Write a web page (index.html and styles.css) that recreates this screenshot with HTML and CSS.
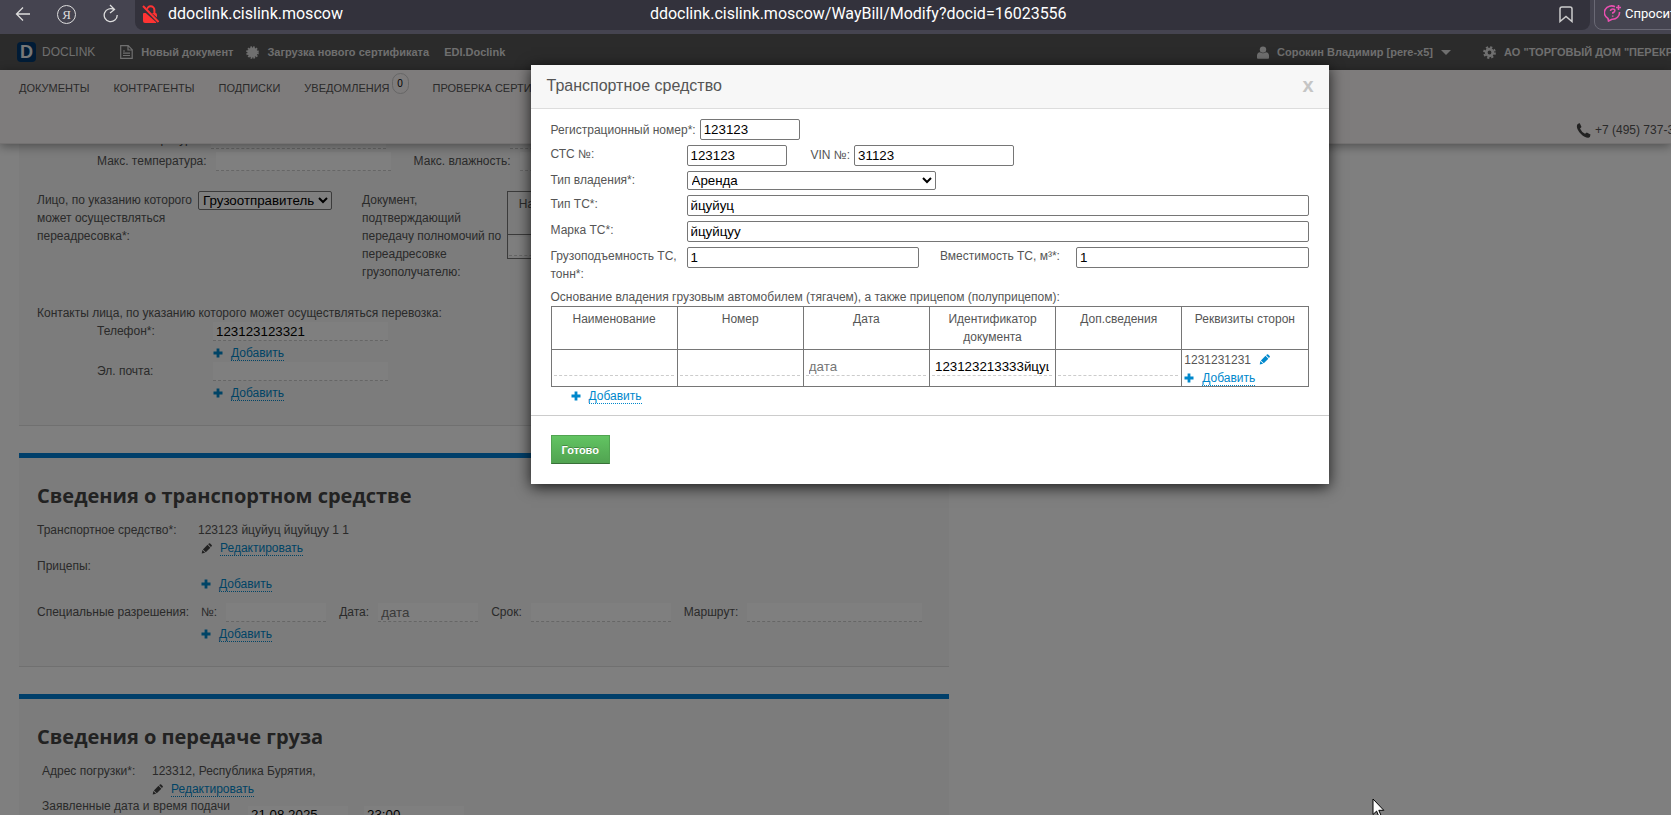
FILE: index.html
```html
<!DOCTYPE html>
<html lang="ru">
<head>
<meta charset="utf-8">
<title>ddoclink.cislink.moscow/WayBill/Modify?docid=16023556</title>
<link rel="stylesheet" href="styles.css">
</head>
<body>
<svg class="defs" aria-hidden="true">
  <symbol id="plus" viewBox="0 0 10 10"><path d="M3.6 0.5h2.8v3.1h3.1v2.8H6.4v3.1H3.6V6.4H0.5V3.6h3.1z"/></symbol>
  <symbol id="pencil" viewBox="0 0 12 12"><path d="M0.8 11.4l.7-3.7 3 3zM2.1 7l5-5 3.1 3.1-5 5zM7.8 1.4l.8-.8q.7-.6 1.4 0l1.6 1.6q.6.7 0 1.4l-.8.8z"/></symbol>
</svg>
<header class="chrome">
  <button class="chrome-btn back" aria-label="Назад"><svg width="16" height="16" viewBox="0 0 16 16"><path d="M15 8H1.5M8 1.5L1.5 8 8 14.500"/></svg></button>
  <button class="chrome-btn ya" aria-label="Яндекс"><span>Я</span></button>
  <button class="chrome-btn reload" aria-label="Обновить"><svg width="16" height="20" viewBox="0 0 16 20"><path d="M14.200 11a6.500 6.500 0 1 1-3-5.300M7 1l4.500 4.500L7 9"/></svg></button>
  <div class="address">
    <svg class="lock" width="17" height="18" viewBox="0 0 17 18"><path d="M5 7V5a3.700 3.700 0 0 1 7.400 0v4" fill="none" stroke="#ff3333" stroke-width="2"/><path d="M1.500 8h12q1.500 0 1.500 1.500V16l-1 2H3q-2 0-2-2V9z" fill="#ff3333"/><path d="M0 2l17 15" stroke="#33323c" stroke-width="4"/><path d="M1 1l15.500 16" stroke="#ff3333" stroke-width="2"/></svg>
    <span class="host">ddoclink.cislink.moscow</span>
    <span class="url">ddoclink.cislink.moscow/WayBill/Modify?docid=16023556</span>
    <svg class="bookmark" width="14" height="17" viewBox="0 0 14 17"><path d="M1 3q0-2 2-2h8q2 0 2 2v12.500L7 10.500 1 15.500z"/></svg>
  </div>
  <button class="ask"><svg width="18" height="17" viewBox="0 0 18 17"><path d="M11 1.800A7 6.600 0 1 0 4 13.500L4.500 16l3.500-1.800A7 6.600 0 0 0 15.500 7M14.500 0v5M12 2.500h5M6.500 6q.3-2 2.300-2 2.200 0 2 1.800-.2 1.200-2 2v1M8.700 10.500v1.200"/></svg>Спросить</button>
</header>

<div class="page">
  <div class="topbar">
    <span class="logo">D</span><span class="brand">DOCLINK</span>
    <a class="top-link" href="#"><svg width="13" height="14" viewBox="0 0 13 14"><path d="M.7.700h7.500l4 4v8.600H.7zM8 .700v4.300h4M3 6h2M3 8.200h7M3 10.500h7" fill="none" stroke="currentColor" stroke-width="1.200"/></svg>Новый документ</a>
    <a class="top-link cert" href="#"><svg width="13" height="13" viewBox="0 0 13 13"><circle cx="6.500" cy="6.500" r="5"/><circle cx="6.500" cy="6.500" r="5.300" fill="none" stroke="currentColor" stroke-width="2" stroke-dasharray="1.700 1.070"/></svg>Загрузка нового сертификата</a>
    <a class="top-link edi" href="#">EDI.Doclink</a>
    <div class="account">
      <a class="top-link user" href="#"><svg width="12" height="13" viewBox="0 0 12 13"><circle cx="6" cy="3.600" r="3.200"/><path d="M0 12V9.500q.2-3 3-3.200 3 2 6 0 2.800.2 3 3.200V12q0 .7-1 .7H1q-1 0-1-.7z"/></svg>Сорокин Владимир [pere-x5]<i class="caret"></i></a>
      <a class="top-link" href="#"><svg width="13" height="13" viewBox="0 0 13 13"><circle cx="6.500" cy="6.500" r="3.300" fill="none" stroke="currentColor" stroke-width="2.800"/><circle cx="6.500" cy="6.500" r="5.400" fill="none" stroke="currentColor" stroke-width="2" stroke-dasharray="2.200 2.040"/></svg>АО "ТОРГОВЫЙ ДОМ "ПЕРЕКРЕСТОК"</a>
    </div>
  </div>
  <div class="band">
    <nav class="menu">
      <a href="#">ДОКУМЕНТЫ</a><a href="#">КОНТРАГЕНТЫ</a><a href="#">ПОДПИСКИ</a><a class="notify" href="#">УВЕДОМЛЕНИЯ<span class="count">0</span></a><a href="#">ПРОВЕРКА СЕРТИФИКАТОВ</a>
    </nav>
    <div class="phone"><svg width="15" height="15" viewBox="0 0 15 15"><path d="M1 2Q2 0 3.800.200L5.500 4 4 5.500Q5.500 9 9 10.800L10.800 9.500 14.500 11.500Q14.500 14 12.500 14.700 9 15 5 11 0 6 1 2z"/></svg>+7 (495) 737-3535</div>
  </div>

  <main class="content">
    <section class="card first">
      <div class="climate"><label for="t0">Мин. температура:</label><input class="line w175" id="t0"><label class="next" for="h0">Мин. влажность:</label><input class="line w175" id="h0"></div>
      <div class="climate"><label for="t1">Макс. температура:</label><input class="line w175" id="t1"><label class="next" for="h1">Макс. влажность:</label><input class="line w175" id="h1"></div>
      <div class="redirect">
        <label for="who">Лицо, по указанию которого может осуществляться переадресовка*:</label>
        <div><select id="who"><option>Грузоотправитель</option></select></div>
        <div class="doc-label">Документ, подтверждающий передачу полномочий по переадресовке грузополучателю:</div>
        <table class="grid">
          <tr><th>Наименование</th><th>Номер</th><th>Дата</th><th>Доп.сведения</th></tr>
          <tr><td><input class="line" aria-label="Наименование"></td><td><input class="line" aria-label="Номер"></td><td><input class="line" aria-label="Дата"></td><td><input class="line" aria-label="Доп.сведения"></td></tr>
        </table>
      </div>
      <div>Контакты лица, по указанию которого может осуществляться перевозка:</div>
      <div class="contact"><label for="tel">Телефон*:</label><div><input class="line w175" id="tel" value="123123123321"></div></div>
      <div class="contact add"><span></span><a class="act" href="#"><svg><use href="#plus"/></svg><span>Добавить</span></a></div>
      <div class="contact"><label for="mail">Эл. почта:</label><div><input class="line w175" id="mail"></div></div>
      <div class="contact add"><span></span><a class="act" href="#"><svg><use href="#plus"/></svg><span>Добавить</span></a></div>
    </section>

    <section class="card">
      <h2>Сведения о транспортном средстве</h2>
      <div class="pair"><span>Транспортное средство*:</span><span>123123 йцуйуц йцуйцуу 1 1</span></div>
      <div class="pair"><span></span><a class="act edit" href="#"><svg><use href="#pencil"/></svg><span>Редактировать</span></a></div>
      <div class="pair"><span>Прицепы:</span></div>
      <div class="pair"><span></span><a class="act indent" href="#"><svg><use href="#plus"/></svg><span>Добавить</span></a></div>
      <div class="pair permits"><span>Специальные разрешения:</span>
        <div class="permit-fields">
          <span><label for="pn">№:</label><input class="line w100" id="pn"></span>
          <span><label for="pd">Дата:</label><input class="line w100" id="pd" placeholder="дата"></span>
          <span><label for="ps">Срок:</label><input class="line w140" id="ps"></span>
          <span><label for="pm">Маршрут:</label><input class="line w175" id="pm"></span>
        </div>
      </div>
      <div class="pair"><span></span><a class="act indent" href="#"><svg><use href="#plus"/></svg><span>Добавить</span></a></div>
    </section>

    <section class="card">
      <h2>Сведения о передаче груза</h2>
      <div class="cargo"><span>Адрес погрузки*:</span><span>123312, Республика Бурятия,</span></div>
      <div class="cargo"><span></span><a class="act edit" href="#"><svg><use href="#pencil"/></svg><span>Редактировать</span></a></div>
      <div class="arrival"><label for="ad">Заявленные дата и время подачи транспортного средства:</label><input class="line w100" id="ad" value="21.08.2025"><input class="line w100" aria-label="Время" value="23:00"></div>
    </section>
  </main>

  <div class="overlay"></div>

  <div class="modal" role="dialog" aria-labelledby="mt">
    <div class="modal-head"><h3 id="mt">Транспортное средство</h3><button class="close" aria-label="Закрыть">x</button></div>
    <form class="modal-body">
      <div class="row mid"><label for="reg">Регистрационный номер*:</label><input class="box w100" id="reg" value="123123"></div>
      <div class="row"><label class="lab" for="sts">СТС №:</label><input class="box w100" id="sts" value="123123"><label class="vin" for="vin">VIN №:</label><input class="box w160" id="vin" value="31123"></div>
      <div class="row"><label class="lab" for="own">Тип владения*:</label><select id="own" class="own"><option>Аренда</option></select></div>
      <div class="row"><label class="lab" for="type">Тип ТС*:</label><input class="box grow" id="type" value="йцуйуц"></div>
      <div class="row"><label class="lab" for="mark">Марка ТС*:</label><input class="box grow" id="mark" value="йцуйцуу"></div>
      <div class="halves">
        <div class="row"><label class="lab" for="cap">Грузоподъемность ТС, тонн*:</label><input class="box grow" id="cap" value="1"></div>
        <div class="row"><label class="lab" for="vol">Вместимость ТС, м³*:</label><input class="box grow" id="vol" value="1"></div>
      </div>
      <div>Основание владения грузовым автомобилем (тягачем), а также прицепом (полуприцепом):</div>
      <table class="grid">
        <tr><th>Наименование</th><th>Номер</th><th>Дата</th><th>Идентификатор документа</th><th>Доп.сведения</th><th>Реквизиты сторон</th></tr>
        <tr>
          <td><input class="line" aria-label="Наименование"></td>
          <td><input class="line" aria-label="Номер"></td>
          <td><input class="line" aria-label="Дата" placeholder="дата"></td>
          <td><input class="line" aria-label="Идентификатор документа" value="123123213333йцуцйу"></td>
          <td><input class="line" aria-label="Доп.сведения"></td>
          <td class="sides"><div class="side">1231231231<svg><use href="#pencil"/></svg></div><a class="act" href="#"><svg><use href="#plus"/></svg><span>Добавить</span></a></td>
        </tr>
      </table>
      <a class="act add-row" href="#"><svg><use href="#plus"/></svg><span>Добавить</span></a>
    </form>
    <div class="modal-foot"><button class="done">Готово</button></div>
  </div>
  <svg class="pointer" width="13" height="20" viewBox="0 0 13 20"><path d="M1 1v15.500l3.600-3.400 2.300 5.500 2.200-1-2.300-5.300h5z" fill="#fff" stroke="#000"/></svg>
</div>
</body>
</html>
```

FILE: styles.css
```css
* { box-sizing: border-box; }
html, body { height: 100%; }
body {
  margin: 0;
  display: flex;
  flex-direction: column;
  overflow: hidden;
  font: 12px/18px "Liberation Sans", Arial, sans-serif;
  color: #555;
  background: #fff;
}
.defs { position: absolute; width: 0; height: 0; }
a { color: inherit; text-decoration: none; }
button { font-family: inherit; cursor: pointer; }

/* browser bar */
.chrome {
  flex: none;
  display: flex;
  align-items: flex-start;
  height: 34px;
  padding-left: 9px;
  background: #454450;
  color: #fff;
  font-family: Roboto, "Noto Sans", sans-serif;
}
.chrome-btn {
  flex: none;
  display: flex;
  align-items: center;
  justify-content: center;
  width: 27px;
  height: 28px;
  padding: 0;
  border: 0;
  background: none;
  color: #ddd;
}
.chrome-btn svg { fill: none; stroke: #ddd; stroke-width: 1.3; }
.ya { margin-left: 17px; }
.ya span {
  width: 19px;
  height: 19px;
  border: 1px solid #ddd;
  border-radius: 50%;
  font: 13px/17px "Liberation Serif", serif;
}
.reload { margin: 0 11px 0 17px; }
.address {
  flex: 1;
  display: flex;
  align-items: center;
  height: 30px;
  padding: 0 17px 2px 7px;
  border-radius: 0 0 8px 8px;
  background: #33323c;
  font-size: 16px;
  line-height: 20px;
}
.lock { margin-right: 9px; }
.url { margin-left: 307px; }
.bookmark { margin-left: auto; fill: none; stroke: #ccc; stroke-width: 1.5; }
.ask {
  flex: none;
  display: flex;
  align-items: center;
  gap: 3px;
  width: 100px;
  height: 31px;
  margin: -1px -23px 0 4px;
  padding: 0 0 2px 9px;
  border: 1px solid #6a6975;
  border-radius: 0 0 8px 8px;
  background: #454450;
  color: #fff;
  font: 13px/20px Roboto, "Noto Sans", sans-serif;
  white-space: nowrap;
}
.ask svg { fill: none; stroke: #e850b0; stroke-width: 1.6; }

/* page header */
.page { position: relative; flex: 1; overflow: hidden; }
.topbar {
  display: flex;
  align-items: center;
  height: 36px;
  padding-left: 17px;
  background: #565656;
  color: #dedede;
  font-size: 11px;
  font-weight: bold;
  white-space: nowrap;
}
.logo {
  width: 19px;
  height: 20px;
  margin-right: 6px;
  border-radius: 4px;
  background: #00376c;
  color: #eee;
  font-size: 18px;
  line-height: 20px;
  text-align: center;
}
.brand { margin-right: 25px; font-size: 12px; font-weight: normal; }
.top-link { display: flex; align-items: center; gap: 8px; }
.top-link svg { fill: currentColor; }
.cert { margin-left: 13px; }
.edi { margin-left: 15px; }
.account { display: flex; flex: 0 0 414px; margin-left: auto; overflow: hidden; }
.user { margin-right: 32px; }
.caret { border: 5px solid transparent; border-top-color: currentColor; border-bottom: 0; }
.band {
  position: relative;
  z-index: 1;
  display: flex;
  align-items: flex-start;
  height: 74px;
  padding: 9px 0 0 19px;
  border-bottom: 1px solid #e8e4e4;
  background: #fdf8f8;
  box-shadow: 0 2px 10px rgba(0, 0, 0, 0.4);
}
.menu { display: flex; gap: 24px; font-size: 11px; white-space: nowrap; }
.count {
  display: inline-block;
  width: 17px;
  height: 21px;
  margin: -6px 0 0 2px;
  border: 1px solid #ccc;
  border-radius: 9px;
  color: #000;
  font-size: 10px;
  line-height: 19px;
  text-align: center;
  vertical-align: top;
}
.phone {
  display: flex;
  align-items: center;
  gap: 4px;
  flex: 0 0 95px;
  margin: 42px 0 0 auto;
  overflow: hidden;
  white-space: nowrap;
}
.phone svg { flex: none; fill: #444; }

/* cards */
.content { width: 930px; margin-left: 19px; }
.card {
  margin-bottom: 27px;
  padding: 24px 18px 23px;
  border-top: 5px solid #007fd4;
  border-bottom: 1px solid #e0e0e0;
  background: #f8f8f8;
}
.card.first { margin-top: -14px; padding-top: 0; border-top: 0; }
h2 {
  margin: 0 0 11px;
  color: #444;
  font: bold 20px/28px "Open Sans", "Noto Sans", sans-serif;
}
.line {
  display: block;
  width: 100%;
  height: 19px;
  padding: 1px 3px;
  border: 0;
  border-bottom: 1px dashed #ccc;
  background: #fff;
  color: #000;
  font-family: inherit;
}
.w100 { width: 100px; }
.w140 { width: 140px; }
.w160 { width: 160px; }
.w175 { width: 175px; }
::placeholder { color: #757575; }
.climate { display: flex; height: 22px; padding-left: 60px; gap: 9px; white-space: nowrap; }
.climate .next { margin-left: 14px; }
.redirect {
  display: grid;
  grid-template-columns: 161px 164px 145px 1fr;
  align-items: start;
  margin: 17px 0 23px;
}
select {
  height: 19px;
  padding: 0;
  border: 1px solid #767676;
  border-radius: 2px;
  background: #fff;
  color: #000;
  font-family: inherit;
}
.redirect select { width: 134px; }
.contact { display: grid; grid-template-columns: 116px 1fr; height: 22px; padding-left: 60px; }
.contact.add { height: 18px; }
.act { display: flex; color: #0088cc; }
.act svg { flex: none; width: 10px; height: 10px; margin: 4px 8px 0 0; fill: currentColor; }
.act span { height: 17px; border-bottom: 1px dotted #0088cc; }
.pair { display: grid; grid-template-columns: 161px 1fr; min-height: 18px; }
.indent { margin-left: 3px; }
.edit { margin-left: 3px; }
.edit svg { width: 11px; height: 11px; color: #444; }
.permits { margin: 10px 0 3px; white-space: nowrap; }
.permit-fields { display: flex; gap: 13px; padding-left: 3px; }
.permit-fields > span { display: flex; gap: 9px; }
.cargo { display: grid; grid-template-columns: 110px 1fr; padding-left: 5px; }
.cargo .edit { margin-left: 0; }
.arrival { display: flex; align-items: center; gap: 16px; padding-left: 5px; }
.arrival label { width: 190px; }
.overlay { position: absolute; inset: 0; z-index: 2; background: rgba(0, 0, 0, 0.5); }

/* dialog */
.modal {
  position: absolute;
  z-index: 3;
  top: 31px;
  left: calc(50% - 305px);
  width: 798px;
  background: #fff;
  box-shadow: 0 3px 14px rgba(0, 0, 0, 0.8);
}
.modal-head {
  display: flex;
  align-items: center;
  justify-content: space-between;
  height: 44px;
  padding: 0 14px 2px 16px;
  border-bottom: 1px solid #ddd;
  background: #f7f7f7;
}
h3 { margin: 0; font-size: 16px; font-weight: normal; line-height: 24px; }
.close { padding: 0 1px 2px; border: 0; background: none; color: #c5c5c5; font-size: 20px; font-weight: bold; line-height: 20px; }
.modal-body { padding: 10px 20px 11px; }
.row { display: flex; align-items: flex-start; margin-bottom: 5px; }
.row.mid { align-items: center; gap: 4px; }
.lab { flex: 0 0 136px; }
.box {
  height: 21px;
  padding: 1px 3px;
  border: 1px solid #767676;
  border-radius: 2px;
  background: #fff;
  color: #000;
  font-family: inherit;
}
.grow { flex: 1; min-width: 0; }
.own { width: 249px; }
.vin { margin: 1px 4px 0 24px; }
.halves { display: grid; grid-template-columns: 1fr 1fr; gap: 21px; }
.grid { width: 100%; border-collapse: collapse; table-layout: fixed; }
.grid th { height: 43px; padding: 3px 8px; border: 1px solid #767676; font-weight: normal; vertical-align: top; }
.grid td { padding: 2px 4px 2px 1px; border: 1px solid #767676; }
.modal .grid td { height: 37px; padding: 2px 3px 5px 2px; }
.modal .grid td.sides { padding: 0 2px; }
.side { display: flex; align-items: center; gap: 8px; }
.side svg { width: 11px; height: 11px; fill: #0088cc; }
.add-row { padding-left: 20px; }
.modal-foot { padding: 19px 20px 20px; border-top: 1px solid #ccc; }
.done {
  display: block;
  height: 29px;
  padding: 0 10px;
  border: 1px solid #51a351;
  border-bottom-color: #387038;
  background: linear-gradient(#62c462, #51a351);
  color: #fff;
  font-size: 11px;
  font-weight: bold;
  text-shadow: 0 -1px 0 rgba(0, 0, 0, 0.25);
}
.pointer { position: absolute; z-index: 4; left: 1372px; top: 764px; }
```
